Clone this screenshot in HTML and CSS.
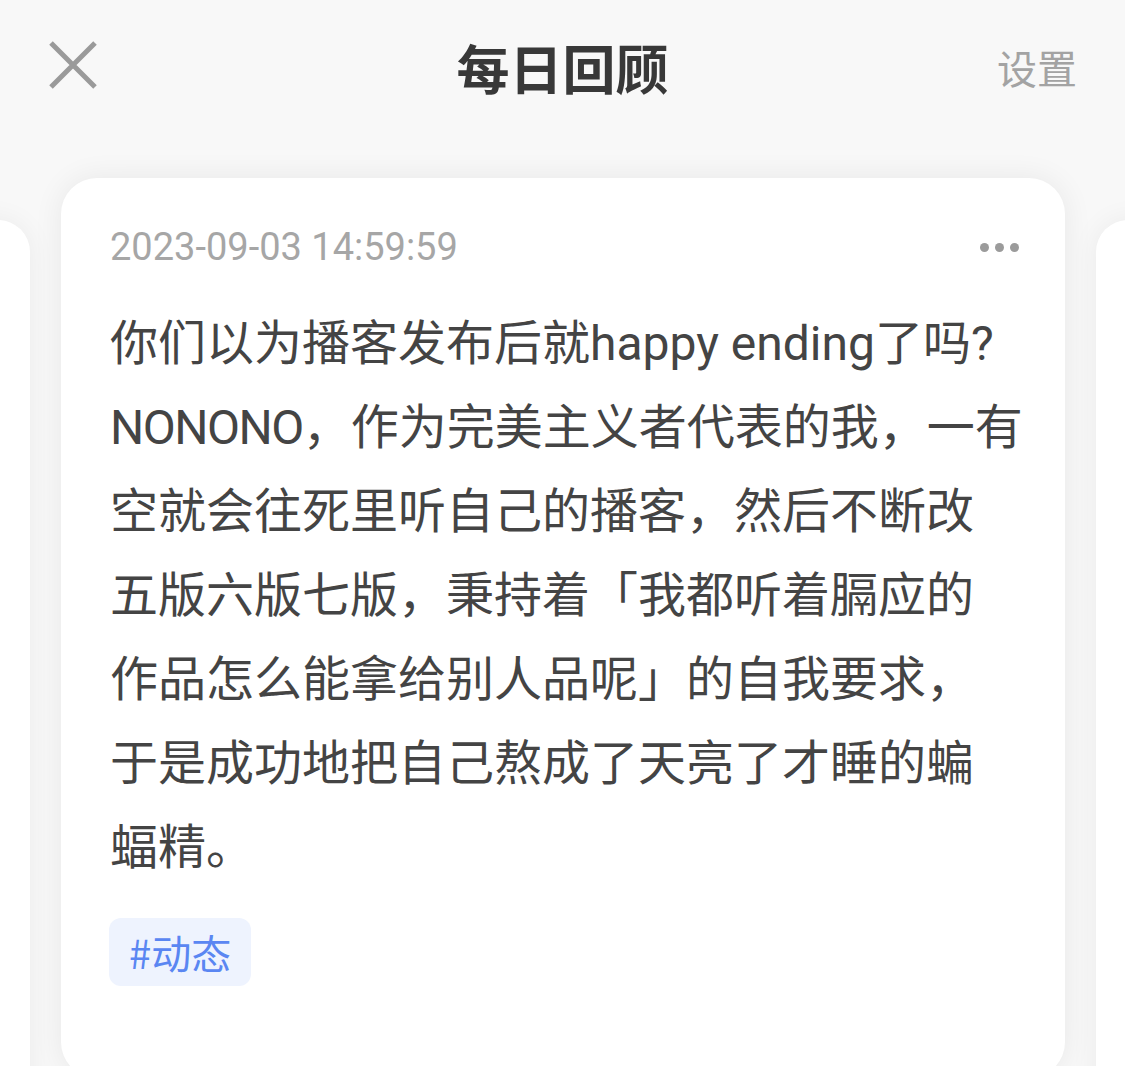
FILE: index.html
```html
<!DOCTYPE html>
<html lang="zh">
<head>
<meta charset="utf-8">
<title>每日回顾</title>
<link rel="stylesheet" href="styles.css">
</head>
<body>
<header class="topbar">
  <button class="close" aria-label="关闭">
    <svg width="50" height="50" viewBox="0 0 50 50"><path d="M3 3 L47 47 M47 3 L3 47" stroke="#9a9a9a" stroke-width="5" stroke-linecap="butt" fill="none"/></svg>
  </button>
  <h1 class="title">每日回顾</h1>
  <span class="settings">设置</span>
</header>
<main class="carousel">
  <div class="side-card side-left"></div>
  <article class="card">
    <div class="card-head">
      <time class="date">2023-09-03 14:59:59</time>
      <span class="more"><i></i><i></i><i></i></span>
    </div>
    <p class="content">你们以为播客发布后就happy ending了吗?<br><span class="latin">NONONO</span>，作为完美主义者代表的我，一有<br>空就会往死里听自己的播客，然后不断改<br>五版六版七版，秉持着「我都听着膈应的<br>作品怎么能拿给别人品呢」的自我要求，<br>于是成功地把自己熬成了天亮了才睡的蝙<br>蝠精。</p>
    <span class="tag">#动态</span>
  </article>
  <div class="side-card side-right"></div>
</main>
</body>
</html>
```

FILE: styles.css
```css
* { box-sizing: border-box; }
html, body {
  margin: 0;
  padding: 0;
  background: #f8f8f8;
  height: 1066px;
  overflow: hidden;
  font-family: "Noto Sans CJK SC", "Noto Sans", sans-serif;
}
.topbar {
  height: 178px;
  display: flex;
  align-items: flex-start;
  justify-content: space-between;
  padding: 0 48px 0 48px;
  position: relative;
}
.close {
  margin-top: 40px;
  width: 50px;
  height: 50px;
  padding: 0;
  border: 0;
  background: none;
}
.close svg { display: block; }
.title {
  position: absolute;
  left: 0;
  right: 0;
  top: 33px;
  margin: 0;
  text-align: center;
  font-size: 53px;
  line-height: 68px;
  font-weight: 700;
  color: #383838;
  pointer-events: none;
}
.settings {
  margin-top: 37px;
  font-size: 40px;
  line-height: 60px;
  color: #a3a3a3;
}
.carousel {
  display: flex;
  align-items: flex-start;
  gap: 31px;
  margin-left: -974px;
}
.side-card {
  flex: 0 0 1004px;
  min-width: 0;
  height: 900px;
  margin-top: 42px;
  background: #fff;
  border-radius: 32px;
  box-shadow: 0 0 28px rgba(0,0,0,0.06);
}
.card {
  flex: 0 0 1004px;
  min-width: 0;
  height: 900px;
  background: #fff;
  border-radius: 36px;
  box-shadow: 0 0 30px rgba(0,0,0,0.07);
  padding: 45px 46px 0 49px;
  position: relative;
}
.card-head {
  display: flex;
  justify-content: space-between;
  align-items: center;
  height: 48px;
}
.date {
  font-family: "Roboto", "Noto Sans", sans-serif;
  font-size: 38px;
  color: #a6a6a6;
  letter-spacing: 0;
}
.more {
  display: flex;
  gap: 6px;
}
.more i {
  width: 9px;
  height: 9px;
  border-radius: 50%;
  background: #9b9b9b;
}
.content {
  margin: 31px 0 0 0;
  font-family: "Roboto", "Noto Sans CJK SC", sans-serif;
  font-size: 48px;
  line-height: 84px;
  color: #444;
  white-space: nowrap;
}
.latin { letter-spacing: -1.5px; }
.tag {
  display: inline-block;
  margin-top: 28px;
  margin-left: -1px;
  padding: 0 20px;
  height: 68px;
  line-height: 68px;
  border-radius: 12px;
  background: #eef3fe;
  color: #5a86f2;
  font-size: 40px;
}
```
